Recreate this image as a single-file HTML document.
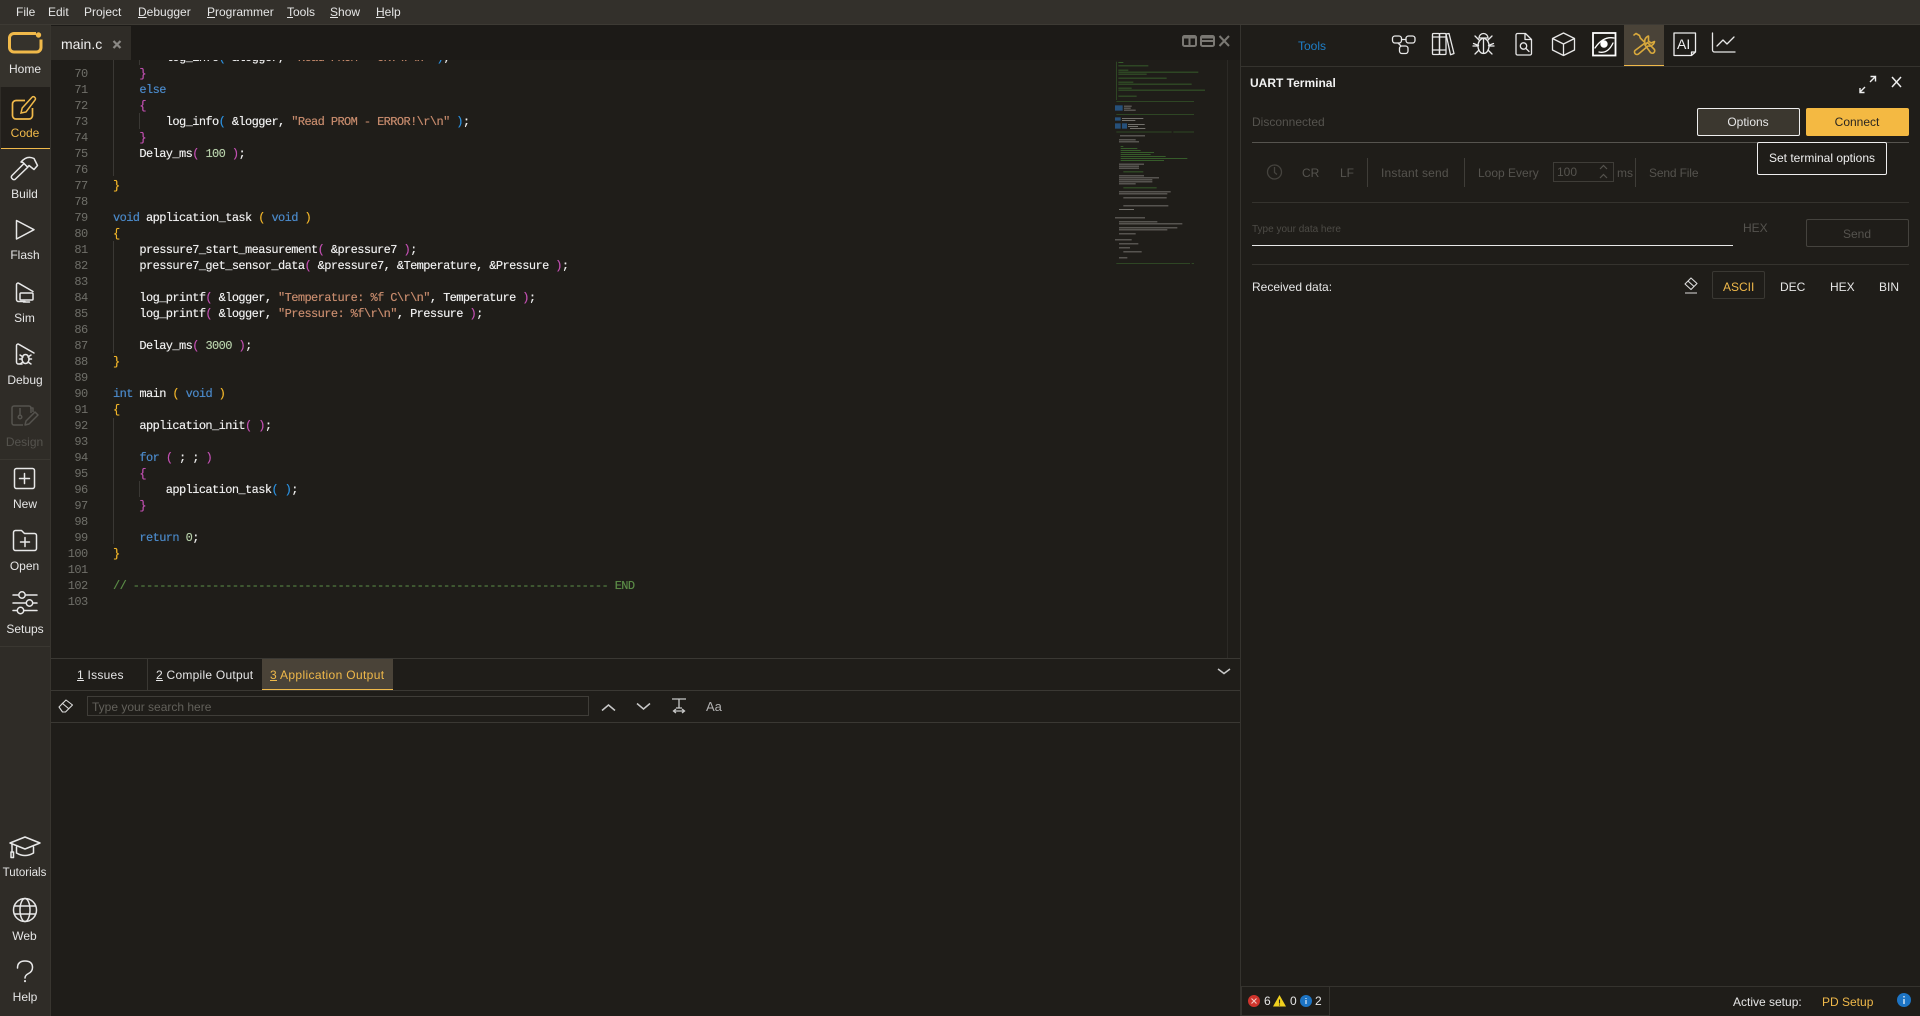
<!DOCTYPE html>
<html><head><meta charset="utf-8"><style>
*{box-sizing:border-box}
html,body{margin:0;padding:0;width:1920px;height:1016px;overflow:hidden;background:#1f1d19}
body{position:relative;font-family:"Liberation Sans",sans-serif;font-size:12px;color:#e6e6e6}
.a{position:absolute}
.t{position:absolute;white-space:nowrap;line-height:16px;transform:translateY(-8px)}
.c{position:absolute;white-space:nowrap;line-height:16px;transform:translate(-50%,-8px)}
.dim{color:#55534e}
.code,.nums{position:absolute;top:60px;height:598px;overflow:hidden;font-family:"Liberation Mono",monospace;font-size:12px;letter-spacing:-.6px;line-height:16px;white-space:pre}
.code{left:113px;width:1000px;color:#eeeeee;text-shadow:0 0 .4px currentColor}
.code>div{position:relative;top:-10px;height:16px}
.nums{left:50px;width:37.6px;text-align:right;color:#6f6f69;padding-top:6px}
.nums div{height:16px}
.k{color:#4a88c7}.p1{color:#f0b429}.p2{color:#c04fb0}.p3{color:#2b8fdc}.s{color:#c58a6c}.n{color:#b5cea8}.g{color:#5a8a46}
</style></head><body>

<!-- menu -->
<div class="a" style="left:0;top:0;width:1920px;height:25px;background:#33302b;border-bottom:1px solid #3d3a34"></div>
<div class="t" style="left:16px;top:12px">File</div>
<div class="t" style="left:48px;top:12px">Edit</div>
<div class="t" style="left:84px;top:12px">Project</div>
<div class="t" style="left:138px;top:12px"><u>D</u>ebugger</div>
<div class="t" style="left:207px;top:12px"><u>P</u>rogrammer</div>
<div class="t" style="left:287px;top:12px"><u>T</u>ools</div>
<div class="t" style="left:330px;top:12px"><u>S</u>how</div>
<div class="t" style="left:376px;top:12px"><u>H</u>elp</div>

<!-- sidebar -->
<div class="a" style="left:0;top:25px;width:51px;height:991px;background:#2f2c27;border-right:1px solid #38352f"></div>
<div class="a" style="left:0;top:25px;width:50px;height:62px;background:#35322c"></div>
<div class="a" style="left:1px;top:87px;width:49px;height:62px;background:#221f1b;border-bottom:1px solid #f0b94a"></div>
<div class="a" style="left:0;top:459px;width:50px;height:1px;background:#3a3731"></div>
<div class="a" style="left:0;top:646px;width:50px;height:1px;background:#3a3731"></div>
<div class="c" style="left:25px;top:69px">Home</div>
<div class="c" style="left:25px;top:133px;color:#f0b94a">Code</div>
<div class="c" style="left:24.5px;top:194px">Build</div>
<div class="c" style="left:25px;top:255px">Flash</div>
<div class="c" style="left:24.5px;top:318px">Sim</div>
<div class="c" style="left:25px;top:380px">Debug</div>
<div class="c dim" style="left:24.5px;top:442px">Design</div>
<div class="c" style="left:25px;top:504px">New</div>
<div class="c" style="left:24.5px;top:566px">Open</div>
<div class="c" style="left:25px;top:629px">Setups</div>
<div class="c" style="left:24.5px;top:873px;font-size:11.5px">Tutorials</div>
<div class="c" style="left:24.5px;top:936px">Web</div>
<div class="c" style="left:25px;top:997px">Help</div>

<!-- editor tab -->
<div class="a" style="left:51px;top:25px;width:1189px;height:35px;background:#1c1a17"></div>
<div class="a" style="left:51px;top:26px;width:80px;height:34px;background:#2f2c27"></div>
<div class="t" style="left:61px;top:44px;font-size:14px;color:#eee">main.c</div>

<!-- code -->
<div class="nums"><div>70</div><div>71</div><div>72</div><div>73</div><div>74</div><div>75</div><div>76</div><div>77</div><div>78</div><div>79</div><div>80</div><div>81</div><div>82</div><div>83</div><div>84</div><div>85</div><div>86</div><div>87</div><div>88</div><div>89</div><div>90</div><div>91</div><div>92</div><div>93</div><div>94</div><div>95</div><div>96</div><div>97</div><div>98</div><div>99</div><div>100</div><div>101</div><div>102</div><div>103</div></div>
<div class="code"><div>        log_info<span class="p3">(</span> &amp;logger, <span class="s">"Read PROM - OK!\r\n"</span> <span class="p3">)</span>;</div><div>    <span class="p2">}</span></div><div>    <span class="k">else</span></div><div>    <span class="p2">{</span></div><div>        log_info<span class="p3">(</span> &amp;logger, <span class="s">"Read PROM - ERROR!\r\n"</span> <span class="p3">)</span>;</div><div>    <span class="p2">}</span></div><div>    Delay_ms<span class="p2">(</span> <span class="n">100</span> <span class="p2">)</span>;</div><div> </div><div><span class="p1">}</span></div><div> </div><div><span class="k">void</span> application_task <span class="p1">(</span> <span class="k">void</span> <span class="p1">)</span></div><div><span class="p1">{</span></div><div>    pressure7_start_measurement<span class="p2">(</span> &amp;pressure7 <span class="p2">)</span>;</div><div>    pressure7_get_sensor_data<span class="p2">(</span> &amp;pressure7, &amp;Temperature, &amp;Pressure <span class="p2">)</span>;</div><div> </div><div>    log_printf<span class="p2">(</span> &amp;logger, <span class="s">"Temperature: %f C\r\n"</span>, Temperature <span class="p2">)</span>;</div><div>    log_printf<span class="p2">(</span> &amp;logger, <span class="s">"Pressure: %f\r\n"</span>, Pressure <span class="p2">)</span>;</div><div> </div><div>    Delay_ms<span class="p2">(</span> <span class="n">3000</span> <span class="p2">)</span>;</div><div><span class="p1">}</span></div><div> </div><div><span class="k">int</span> main <span class="p1">(</span> <span class="k">void</span> <span class="p1">)</span></div><div><span class="p1">{</span></div><div>    application_init<span class="p2">(</span> <span class="p2">)</span>;</div><div> </div><div>    <span class="k">for</span> <span class="p2">(</span> ; ; <span class="p2">)</span></div><div>    <span class="p2">{</span></div><div>        application_task<span class="p3">(</span> <span class="p3">)</span>;</div><div>    <span class="p2">}</span></div><div> </div><div>    <span class="k">return</span> <span class="n">0</span>;</div><div><span class="p1">}</span></div><div> </div><div><span class="g">// ------------------------------------------------------------------------ END</span></div></div>
<!-- indent guides -->
<div class="a" style="left:113px;top:60px;width:1px;height:116px;background:#3a3834"></div>
<div class="a" style="left:113px;top:241px;width:1px;height:112px;background:#3a3834"></div>
<div class="a" style="left:113px;top:418px;width:1px;height:126px;background:#3a3834"></div>
<div class="a" style="left:139px;top:60px;width:1px;height:5px;background:#3a3834"></div>
<div class="a" style="left:139px;top:113px;width:1px;height:16px;background:#3a3834"></div>
<div class="a" style="left:139px;top:481px;width:1px;height:16px;background:#3a3834"></div>

<!-- right editor edge -->
<div class="a" style="left:1227px;top:60px;width:1px;height:598px;background:#2c2a26"></div>
<div class="a" style="left:1240px;top:25px;width:1px;height:991px;background:#35332e"></div>

<!-- bottom panel -->
<div class="a" style="left:51px;top:658px;width:1189px;height:1px;background:#3a3833"></div>
<div class="a" style="left:51px;top:690px;width:1189px;height:1px;background:#3a3833"></div>
<div class="a" style="left:51px;top:722px;width:1189px;height:1px;background:#3a3833"></div>
<div class="a" style="left:147px;top:659px;width:1px;height:31px;background:#3a3833"></div>
<div class="a" style="left:262px;top:659px;width:131px;height:31px;background:#4a4338;border-bottom:1px solid #f0b94a"></div>
<div class="t" style="left:77px;top:675px;letter-spacing:.25px"><u>1</u> Issues</div>
<div class="t" style="left:156px;top:675px;letter-spacing:.25px"><u>2</u> Compile Output</div>
<div class="t" style="left:270px;top:675px;color:#f0b94a;letter-spacing:.35px"><u>3</u> Application Output</div>
<div class="a" style="left:87px;top:696px;width:502px;height:20px;border:1px solid #3f3d38"></div>
<div class="t" style="left:92px;top:707px;color:#62605a">Type your search here</div>
<div class="t" style="left:706px;top:707px;font-size:13px;color:#b0b0b0">Aa</div>

<!-- right panel -->
<div class="a" style="left:1241px;top:66px;width:679px;height:1px;background:#35332e"></div>
<div class="a" style="left:1624px;top:25px;width:40px;height:41px;background:#4a4338;border-bottom:1px solid #f0b94a"></div>
<div class="t" style="left:1298px;top:46px;color:#1f7fc8">Tools</div>
<div class="t" style="left:1250px;top:83px;font-weight:bold;color:#f2f2f2">UART Terminal</div>
<div class="t dim" style="left:1252px;top:122px">Disconnected</div>
<div class="a" style="left:1697px;top:108px;width:103px;height:28px;background:#3b372f;border:1px solid #eee;border-radius:2px"></div>
<div class="c" style="left:1748px;top:122px">Options</div>
<div class="a" style="left:1806px;top:108px;width:103px;height:28px;background:#f4b942;border-radius:2px"></div>
<div class="c" style="left:1857px;top:122px;color:#2a2620">Connect</div>
<div class="a" style="left:1252px;top:142px;width:657px;height:1px;background:#56544f"></div>
<div class="a" style="left:1757px;top:142px;width:130px;height:33px;background:#1f1d19;border:1px solid #eee;border-radius:2px"></div>
<div class="c" style="left:1822px;top:158px;color:#eee">Set terminal options</div>

<div class="t dim" style="left:1302px;top:173px">CR</div>
<div class="t dim" style="left:1340px;top:173px">LF</div>
<div class="a" style="left:1367px;top:158px;width:1px;height:29px;background:#3f3d38"></div>
<div class="t dim" style="left:1381px;top:173px;letter-spacing:.2px">Instant send</div>
<div class="a" style="left:1464px;top:158px;width:1px;height:29px;background:#3f3d38"></div>
<div class="t dim" style="left:1478px;top:173px">Loop Every</div>
<div class="a" style="left:1553px;top:162px;width:61px;height:20px;border:1px solid #3f3d38"></div>
<div class="t dim" style="left:1557px;top:172px">100</div>
<div class="t dim" style="left:1617px;top:173px">ms</div>
<div class="a" style="left:1635px;top:158px;width:1px;height:29px;background:#3f3d38"></div>
<div class="t dim" style="left:1649px;top:173px;letter-spacing:-.15px">Send File</div>
<div class="a" style="left:1252px;top:202px;width:657px;height:1px;background:#35332e"></div>
<div class="t" style="left:1252px;top:230px;font-size:10px;color:#4d4b46">Type your data here</div>
<div class="a" style="left:1252px;top:245px;width:481px;height:1px;background:#e8e8e8"></div>
<div class="t dim" style="left:1743px;top:228px">HEX</div>
<div class="a" style="left:1806px;top:219px;width:103px;height:28px;border:1px solid #45433e;border-radius:2px"></div>
<div class="c dim" style="left:1857px;top:234px">Send</div>
<div class="a" style="left:1252px;top:264px;width:657px;height:1px;background:#35332e"></div>
<div class="t" style="left:1252px;top:287px">Received data:</div>
<div class="a" style="left:1712px;top:271px;width:53px;height:28px;border:1px solid #3a3833;border-radius:2px"></div>
<div class="t" style="left:1723px;top:287px;color:#f0b94a">ASCII</div>
<div class="t" style="left:1780px;top:287px">DEC</div>
<div class="t" style="left:1830px;top:287px">HEX</div>
<div class="t" style="left:1879px;top:287px">BIN</div>

<!-- status -->
<div class="a" style="left:1241px;top:986px;width:679px;height:1px;background:#35332e"></div>
<div class="a" style="left:1241px;top:986px;width:89px;height:30px;border:1px solid #35332e"></div>
<div class="t" style="left:1264px;top:1001px">6</div>
<div class="t" style="left:1290px;top:1001px">0</div>
<div class="t" style="left:1315px;top:1001px">2</div>
<div class="t" style="left:1733px;top:1002px">Active setup:</div>
<div class="t" style="left:1822px;top:1002px;color:#f0b94a">PD Setup</div>
<div class="t" style="left:1677px;top:44px;font-size:14px;color:#eee">AI</div>

<!-- icons -->
<svg class="a" style="left:0;top:0" width="1920" height="1016" viewBox="0 0 1920 1016" fill="none">
<!-- sidebar -->
<g stroke="#f0b94a" fill="none">
<path d="M36 33.5H14a4.5 4.5 0 0 0-4.5 4.5v9.5a4.5 4.5 0 0 0 4.5 4.5h22.5a4.5 4.5 0 0 0 4.5-4.500v-8" stroke-width="3"/>
<path d="M25 100.500H16a3.500 3.500 0 0 0-3.500 3.500v11.500a3.500 3.500 0 0 0 3.500 3.500h13a3.500 3.500 0 0 0 3.500-3.500V108" stroke-width="1.700"/>
<path d="M21 113l1.200-5L32 97.200a1.700 1.700 0 0 1 2.400-.2l.6.600a1.700 1.700 0 0 1 0 2.400L26 112z" stroke-width="1.500"/>
</g>
<circle cx="38.500" cy="35" r="2.700" fill="#f0b94a"/>
<g stroke="#e8e8e8" stroke-width="1.500" stroke-linejoin="round" stroke-linecap="round">
<path d="M24 163.500L12 175.500a2 2 0 0 0 0 3l.5.500a2 2 0 0 0 3 0L28 167"/>
<path d="M21 162q6-7 13-3.500l3.500 7-3.500 4-5-4-1.500 1.500-4.500-4.500z"/>
<path d="M16.500 220.500L34 229.700 16.500 239z"/>
<path d="M25 301.500h-6.500a2 2 0 0 1-2-2V284.500a1.500 1.500 0 0 1 2.300-1.200L33 291.500"/>
<rect x="20" y="293" width="13" height="7" rx="1"/><path d="M23.500 302h6"/>
<path d="M22 364h-3.500a2 2 0 0 1-2-2V345.500a1.500 1.500 0 0 1 2.300-1.200L34 353"/>
<ellipse cx="25.500" cy="359" rx="3.500" ry="4.500"/><path d="M20 355l3 2M31 355l-3 2M19.500 359h2.500M31.500 359h-2.500M20 364l3-2M31 364l-3-2"/>
<rect x="14.500" y="468.500" width="20" height="20" rx="2"/><path d="M24.500 473.500v10M19.500 478.500h10"/>
<path d="M13.500 532.500a2 2 0 0 1 2-2h6l3 3h10a2 2 0 0 1 2 2v13a2 2 0 0 1-2 2h-19a2 2 0 0 1-2-2z"/><path d="M25 537.500v9M20.500 542h9"/>
<path d="M13 595h5M26 595h11M13 603h13M33 603h4M13 610.500h4M24 610.500h13"/>
<circle cx="22" cy="595" r="3.200"/><circle cx="29.500" cy="603" r="3.200"/><circle cx="20.500" cy="610.500" r="3.200"/>
<path d="M10 843l15-6 15 6-15 6z"/><path d="M16.500 847v6q8.500 5 17 0v-6"/><path d="M12 844v8"/><rect x="11" y="852" width="2.500" height="5.500"/>
<circle cx="25" cy="910" r="11.500"/><ellipse cx="25" cy="910" rx="5" ry="11.500"/><path d="M14.500 906h21M14.500 914h21"/>
<path d="M17.500 968q0-7 7.500-7t7.500 6.500q0 4-4 6-3.500 1.800-3.500 4.500"/><path d="M25 981v.2" stroke-width="2"/>
</g>
<g stroke="#55534e" stroke-width="1.500" stroke-linejoin="round">
<path d="M23 425h-9a2 2 0 0 1-2-2V408a2 2 0 0 1 2-2h15a2 2 0 0 1 2 2v5"/>
<path d="M20 408v8"/><circle cx="20" cy="417" r="1.800"/>
<path d="M25 425l1-4 9-9 3 3-9 9z"/><path d="M30 408h3v4"/>
</g>
<!-- tab close -->
<path d="M113.500 41l7 7M120.500 41l-7 7" stroke="#8a8884" stroke-width="2.200"/>
<!-- window controls -->
<g stroke="#7a7873" stroke-width="2">
<rect x="1183" y="36" width="13" height="10" rx="1.500"/><path d="M1189.500 36v10M1183 37.500h13"/>
<rect x="1201" y="36" width="13" height="10" rx="1.500"/><path d="M1201 41h13M1201 37.500h13"/>
<path d="M1219.500 36l9.500 10M1229 36l-9.500 10"/>
</g>
<!-- bottom panel icons -->
<g stroke="#dcdcdc" stroke-width="1.100" stroke-linejoin="round">
<path d="M59 707l7-7 6.500 5-7 7h-3z"/><path d="M62 703l6.500 5.500"/>
<path d="M1685 284l6-6 6 5.500-6 6z"/><path d="M1688 281l6 5.500M1685 293h12"/>
</g>
<path d="M602 710.500l6.500-5.500 6.500 5.500M637 703.500l6.500 5.500 6.500-5.500M1218 669l6 4.500 6-4.500" stroke="#c8c8c8" stroke-width="1.500"/>
<path d="M672 699h14M679 699v9M676 708h6M674 711h10M676 709l-2.500 2 2.500 2M682 709l2.500 2-2.500 2" stroke="#c8c8c8" stroke-width="1.300"/>
<!-- tools -->
<g stroke="#e8e8e8" stroke-width="1.300" stroke-linejoin="round" stroke-linecap="round">
<rect x="1392.500" y="36" width="9" height="7" rx="2.500"/><rect x="1406" y="36" width="9" height="7" rx="2.500"/><rect x="1399.500" y="46" width="8.500" height="7.500" rx="2.500"/>
<path d="M1401.500 39.500h4.500M1398 43l3 3"/>
<rect x="1432.500" y="33.500" width="7" height="21" rx="1"/><rect x="1439.500" y="33.500" width="6.500" height="21" rx="1"/><path d="M1432.500 37h13.500M1432.500 50h13.500"/>
<path d="M1446 34l3-.5 5 20-3.500 1.200z"/>
<ellipse cx="1483.500" cy="46" rx="5.500" ry="7.500"/><path d="M1483.500 39v14M1479 38a4.500 4.500 0 0 1 9 0zM1473.500 43.500l5 2M1493.500 43.500l-5 2M1473 46h5M1494 46h-5M1475 54l4-4M1492 54l-4-4M1475 36l4 4M1492 36l-4 4"/>
<path d="M1516 35a1.500 1.500 0 0 1 1.500-1.500h8l6 6v14a1.500 1.500 0 0 1-1.500 1.500h-12.500a1.500 1.500 0 0 1-1.500-1.500zM1525 33.500v6h6.500"/><circle cx="1523.500" cy="46" r="3.200"/><path d="M1526 48.500l3 3"/>
<path d="M1563.500 33l11 5.500v11.500l-11 5.500-11-5.500v-11.500zM1552.500 38.500l11 5.500 11-5.500M1563.500 44v11.500"/>
<rect x="1593" y="33" width="22.500" height="22.500" stroke-width="1.800" stroke-linejoin="miter" stroke="#fff"/>
<path d="M1595 48q8-12 19-10M1599 52q9 2 14-9" stroke="#fff"/>
<path d="M1674 33h21.500v19l-4 3.500h-17.500zM1691.500 55.500v-3.500h4" stroke="#eee"/>
<path d="M1712.500 33v17a2 2 0 0 0 2 2h20.500M1717 46l6-6 4 4 7-7"/>
</g>
<circle cx="1604" cy="44" r="3.700" fill="#fff"/>
<!-- tools active: wrench + screwdriver -->
<g stroke="#d9a93c" stroke-width="1.600" stroke-linecap="round" stroke-linejoin="round" fill="none">
<path d="M1648.500 36a5.500 5.500 0 0 0-3.500 7L1635 50.500a2.500 2.500 0 0 0 3.500 3.500L1648 46a5.500 5.500 0 0 0 6.500-4.500l-3.500 1.500-2.500-2v-3z"/>
<path d="M1634 35l2-1.500 3.500 2 .8 2.500 3.700 3.700"/>
<path d="M1645 45l2.500-2.500 6.500 6.500a1.800 1.800 0 0 1-3.500 3.500z"/>
</g>
<!-- expand / close -->
<path d="M1860 92l5-5M1860 88v4.500h4.500M1875 77l-5 5M1870.500 76.500h5v5" stroke="#eee" stroke-width="1.400"/>
<path d="M1892 77l9 10M1901 77l-9 10" stroke="#eee" stroke-width="1.500"/>
<!-- terminal dim icons -->
<circle cx="1274.500" cy="172" r="7" stroke="#45433e" stroke-width="1.300"/><path d="M1274.500 167v5.500l2.500 2" stroke="#45433e" stroke-width="1.300"/>
<path d="M1600 169l3.500-3.500 3.500 3.500M1600 178l3.500-3.500 3.500 3.500" stroke="#55534e" stroke-width="1.200"/>
<!-- status icons -->
<circle cx="1254" cy="1001" r="6" fill="#d0342c"/><path d="M1251.500 998.500l5 5M1256.500 998.500l-5 5" stroke="#f3c9c5" stroke-width="1.100"/>
<path d="M1279.500 995l6.500 11.500h-13z" fill="#f0d01e"/><path d="M1279.500 999.500v4M1279.500 1004.500v1" stroke="#2a2620" stroke-width="1.100"/>
<circle cx="1306" cy="1001" r="6" fill="#1d74c4"/><path d="M1306 1000v4M1306 998v1" stroke="#dfeaf5" stroke-width="1.200"/>
<circle cx="1904" cy="1000" r="7" fill="#1d74c4"/><path d="M1904 999v5M1904 996v1.500" stroke="#dfeaf5" stroke-width="1.400"/>
</svg>

<!-- minimap -->
<svg class="a" style="left:1100px;top:20px" width="140" height="280" viewBox="0 0 420 840">
<g fill="#365c2a">
<rect x="49" y="125" width="2" height="115"/>
<rect x="55" y="126" width="15" height="3"/><rect x="55" y="136" width="90" height="3"/><rect x="55" y="149" width="30" height="3"/><rect x="55" y="155" width="240" height="3"/><rect x="55" y="161" width="85" height="3"/><rect x="55" y="173" width="145" height="3"/><rect x="55" y="185" width="45" height="3"/><rect x="55" y="191" width="220" height="3"/><rect x="55" y="203" width="40" height="3"/><rect x="55" y="209" width="260" height="3"/><rect x="55" y="227" width="55" height="3"/>
<rect x="49" y="243" width="233" height="2"/><rect x="49" y="282" width="233" height="2"/><rect x="49" y="335" width="166" height="2"/><rect x="220" y="335" width="62" height="2"/>
<rect x="62" y="378" width="8" height="3"/><rect x="62" y="384" width="50" height="3"/><rect x="62" y="390" width="60" height="3"/><rect x="62" y="396" width="100" height="3"/><rect x="62" y="402" width="90" height="3"/><rect x="62" y="408" width="135" height="3"/><rect x="62" y="414" width="200" height="3"/><rect x="62" y="420" width="130" height="3"/>
<rect x="70" y="454" width="60" height="3"/><rect x="70" y="502" width="100" height="3"/><rect x="49" y="730" width="221" height="2"/><rect x="275" y="730" width="7" height="2"/>
</g>
<g fill="#26507a">
<rect x="45" y="256" width="23" height="16"/><rect x="45" y="292" width="17" height="10"/><rect x="45" y="310" width="17" height="16"/><rect x="66" y="310" width="15" height="16"/>
</g>
<g fill="#73716c">
<rect x="72" y="257" width="23" height="3"/><rect x="72" y="263" width="20" height="3"/><rect x="72" y="269" width="35" height="3"/>
<rect x="66" y="294" width="64" height="3"/><rect x="66" y="300" width="40" height="3"/><rect x="84" y="312" width="50" height="3"/><rect x="84" y="318" width="30" height="3"/><rect x="90" y="324" width="46" height="3"/>
<rect x="60" y="346" width="75" height="3"/><rect x="57" y="358" width="50" height="3"/><rect x="57" y="364" width="60" height="3"/>
<rect x="57" y="431" width="75" height="3"/><rect x="57" y="437" width="60" height="3"/><rect x="57" y="443" width="60" height="3"/>
<rect x="57" y="466" width="75" height="3"/><rect x="57" y="472" width="120" height="3"/><rect x="57" y="478" width="100" height="3"/><rect x="57" y="484" width="100" height="3"/><rect x="57" y="490" width="50" height="3"/>
<rect x="57" y="514" width="155" height="3"/><rect x="57" y="520" width="145" height="3"/><rect x="70" y="532" width="130" height="3"/><rect x="70" y="556" width="135" height="3"/><rect x="57" y="567" width="45" height="3"/>
<rect x="45" y="592" width="90" height="3"/><rect x="57" y="604" width="115" height="3"/><rect x="57" y="610" width="190" height="3"/>
<rect x="57" y="622" width="175" height="3"/><rect x="57" y="628" width="145" height="3"/><rect x="57" y="640" width="50" height="3"/>
<rect x="45" y="658" width="50" height="3"/><rect x="57" y="670" width="58" height="3"/><rect x="57" y="682" width="33" height="3"/><rect x="70" y="694" width="55" height="3"/><rect x="57" y="712" width="25" height="3"/>
</g>
</svg>
</body></html>
